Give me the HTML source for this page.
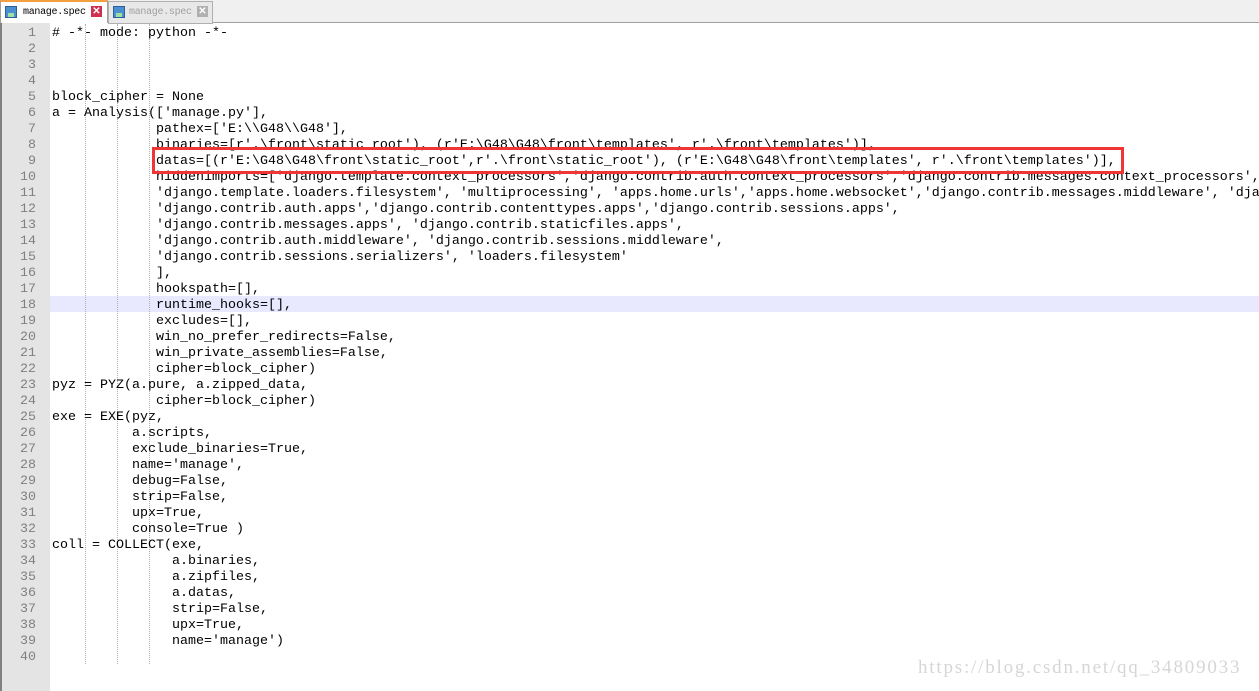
<!DOCTYPE html>
<html><head><meta charset="utf-8"><style>
html,body{margin:0;padding:0;width:1259px;height:691px;overflow:hidden;background:#fff;font-family:"Liberation Mono",monospace;}
#tabs{position:absolute;left:0;top:0;width:1259px;height:22px;background:#f0f0f0;border-bottom:1px solid #a0a0a0;}
.tab{position:absolute;top:1px;height:21px;font-size:10px;line-height:21px;letter-spacing:-0.3px}
.ico{position:absolute;left:4px;top:4px;width:12px;height:12px;background:#4a8fd0;border:1px solid #2a5f9a;box-sizing:border-box}
.ico:after{content:"";position:absolute;left:2px;top:6px;width:6px;height:4px;background:#9fe09f}
.x{position:absolute;top:4px;width:11px;height:11px;color:#fff;font:bold 10px/11px "Liberation Sans",sans-serif;text-align:center;letter-spacing:0}
#gut{position:absolute;left:0;top:23px;width:50px;height:668px;background:#e4e4e4;border-left:2px solid #808080;box-sizing:border-box}
.ln{position:absolute;left:0;width:36px;text-align:right;font-size:13.3px;color:#808080;}
.cl{position:absolute;left:52px;white-space:pre;font-size:13.33px;color:#000;line-height:16px;}
.guide{position:absolute;top:24px;height:640px;border-left:1px dotted #b0b0b0;}
</style></head><body>
<div id="tabs">
 <div class="tab" style="left:0;width:106px;background:#fff;border:1px solid #a0a0a0;border-bottom:none;border-top:2px solid #f5a040;top:0"><div class="ico"></div><span style="position:absolute;left:22px;top:0">manage.spec</span><div class="x" style="left:90px;background:#d03050">✕</div></div>
 <div class="tab" style="left:108px;width:103px;background:#e8e8e8;border:1px solid #b0b0b0;color:#a0a0a0"><div class="ico"></div><span style="position:absolute;left:20px;top:0">manage.spec</span><div class="x" style="left:88px;background:#b0b0b0">✕</div></div>
</div>
<div id="gut"></div>
<div style="position:absolute;left:50px;top:296px;width:1209px;height:16px;background:#e8e8ff"></div>
<div class="guide" style="left:85px"></div><div class="guide" style="left:117px"></div><div class="guide" style="left:149px"></div>
<div id="code"></div>
<div style="position:absolute;left:152px;top:147px;width:966px;height:21px;border:3px solid #f03535;"></div>
<div style="position:absolute;left:918px;top:657px;font:19px 'Liberation Serif',serif;color:#d6d6d6;letter-spacing:1.8px;white-space:nowrap">https://blog.csdn.net/qq_34809033</div>
<script>
var L=["# -*- mode: python -*-","","","","block_cipher = None","a = Analysis(['manage.py'],",
"             pathex=['E:\\\\G48\\\\G48'],",
"             binaries=[r'.\\front\\static_root'), (r'E:\\G48\\G48\\front\\templates', r'.\\front\\templates')],",
"             datas=[(r'E:\\G48\\G48\\front\\static_root',r'.\\front\\static_root'), (r'E:\\G48\\G48\\front\\templates', r'.\\front\\templates')],",
"             hiddenimports=['django.template.context_processors','django.contrib.auth.context_processors','django.contrib.messages.context_processors',",
"             'django.template.loaders.filesystem', 'multiprocessing', 'apps.home.urls','apps.home.websocket','django.contrib.messages.middleware', 'dja",
"             'django.contrib.auth.apps','django.contrib.contenttypes.apps','django.contrib.sessions.apps',",
"             'django.contrib.messages.apps', 'django.contrib.staticfiles.apps',",
"             'django.contrib.auth.middleware', 'django.contrib.sessions.middleware',",
"             'django.contrib.sessions.serializers', 'loaders.filesystem'",
"             ],","             hookspath=[],","             runtime_hooks=[],","             excludes=[],",
"             win_no_prefer_redirects=False,","             win_private_assemblies=False,","             cipher=block_cipher)",
"pyz = PYZ(a.pure, a.zipped_data,","             cipher=block_cipher)","exe = EXE(pyz,",
"          a.scripts,","          exclude_binaries=True,","          name='manage',","          debug=False,","          strip=False,","          upx=True,","          console=True )",
"coll = COLLECT(exe,","               a.binaries,","               a.zipfiles,","               a.datas,","               strip=False,","               upx=True,","               name='manage')",""];
var h="";for(var i=0;i<L.length;i++){var t=24+i*16;h+='<div class="ln" style="top:'+(t+1)+'px;line-height:16px">'+(i+1)+'</div><div class="cl" style="top:'+(t+2)+'px"></div>';}
var c=document.getElementById("code");c.innerHTML=h;var cls=c.querySelectorAll(".cl");for(var i=0;i<L.length;i++)cls[i].textContent=L[i];
</script>
</body></html>
